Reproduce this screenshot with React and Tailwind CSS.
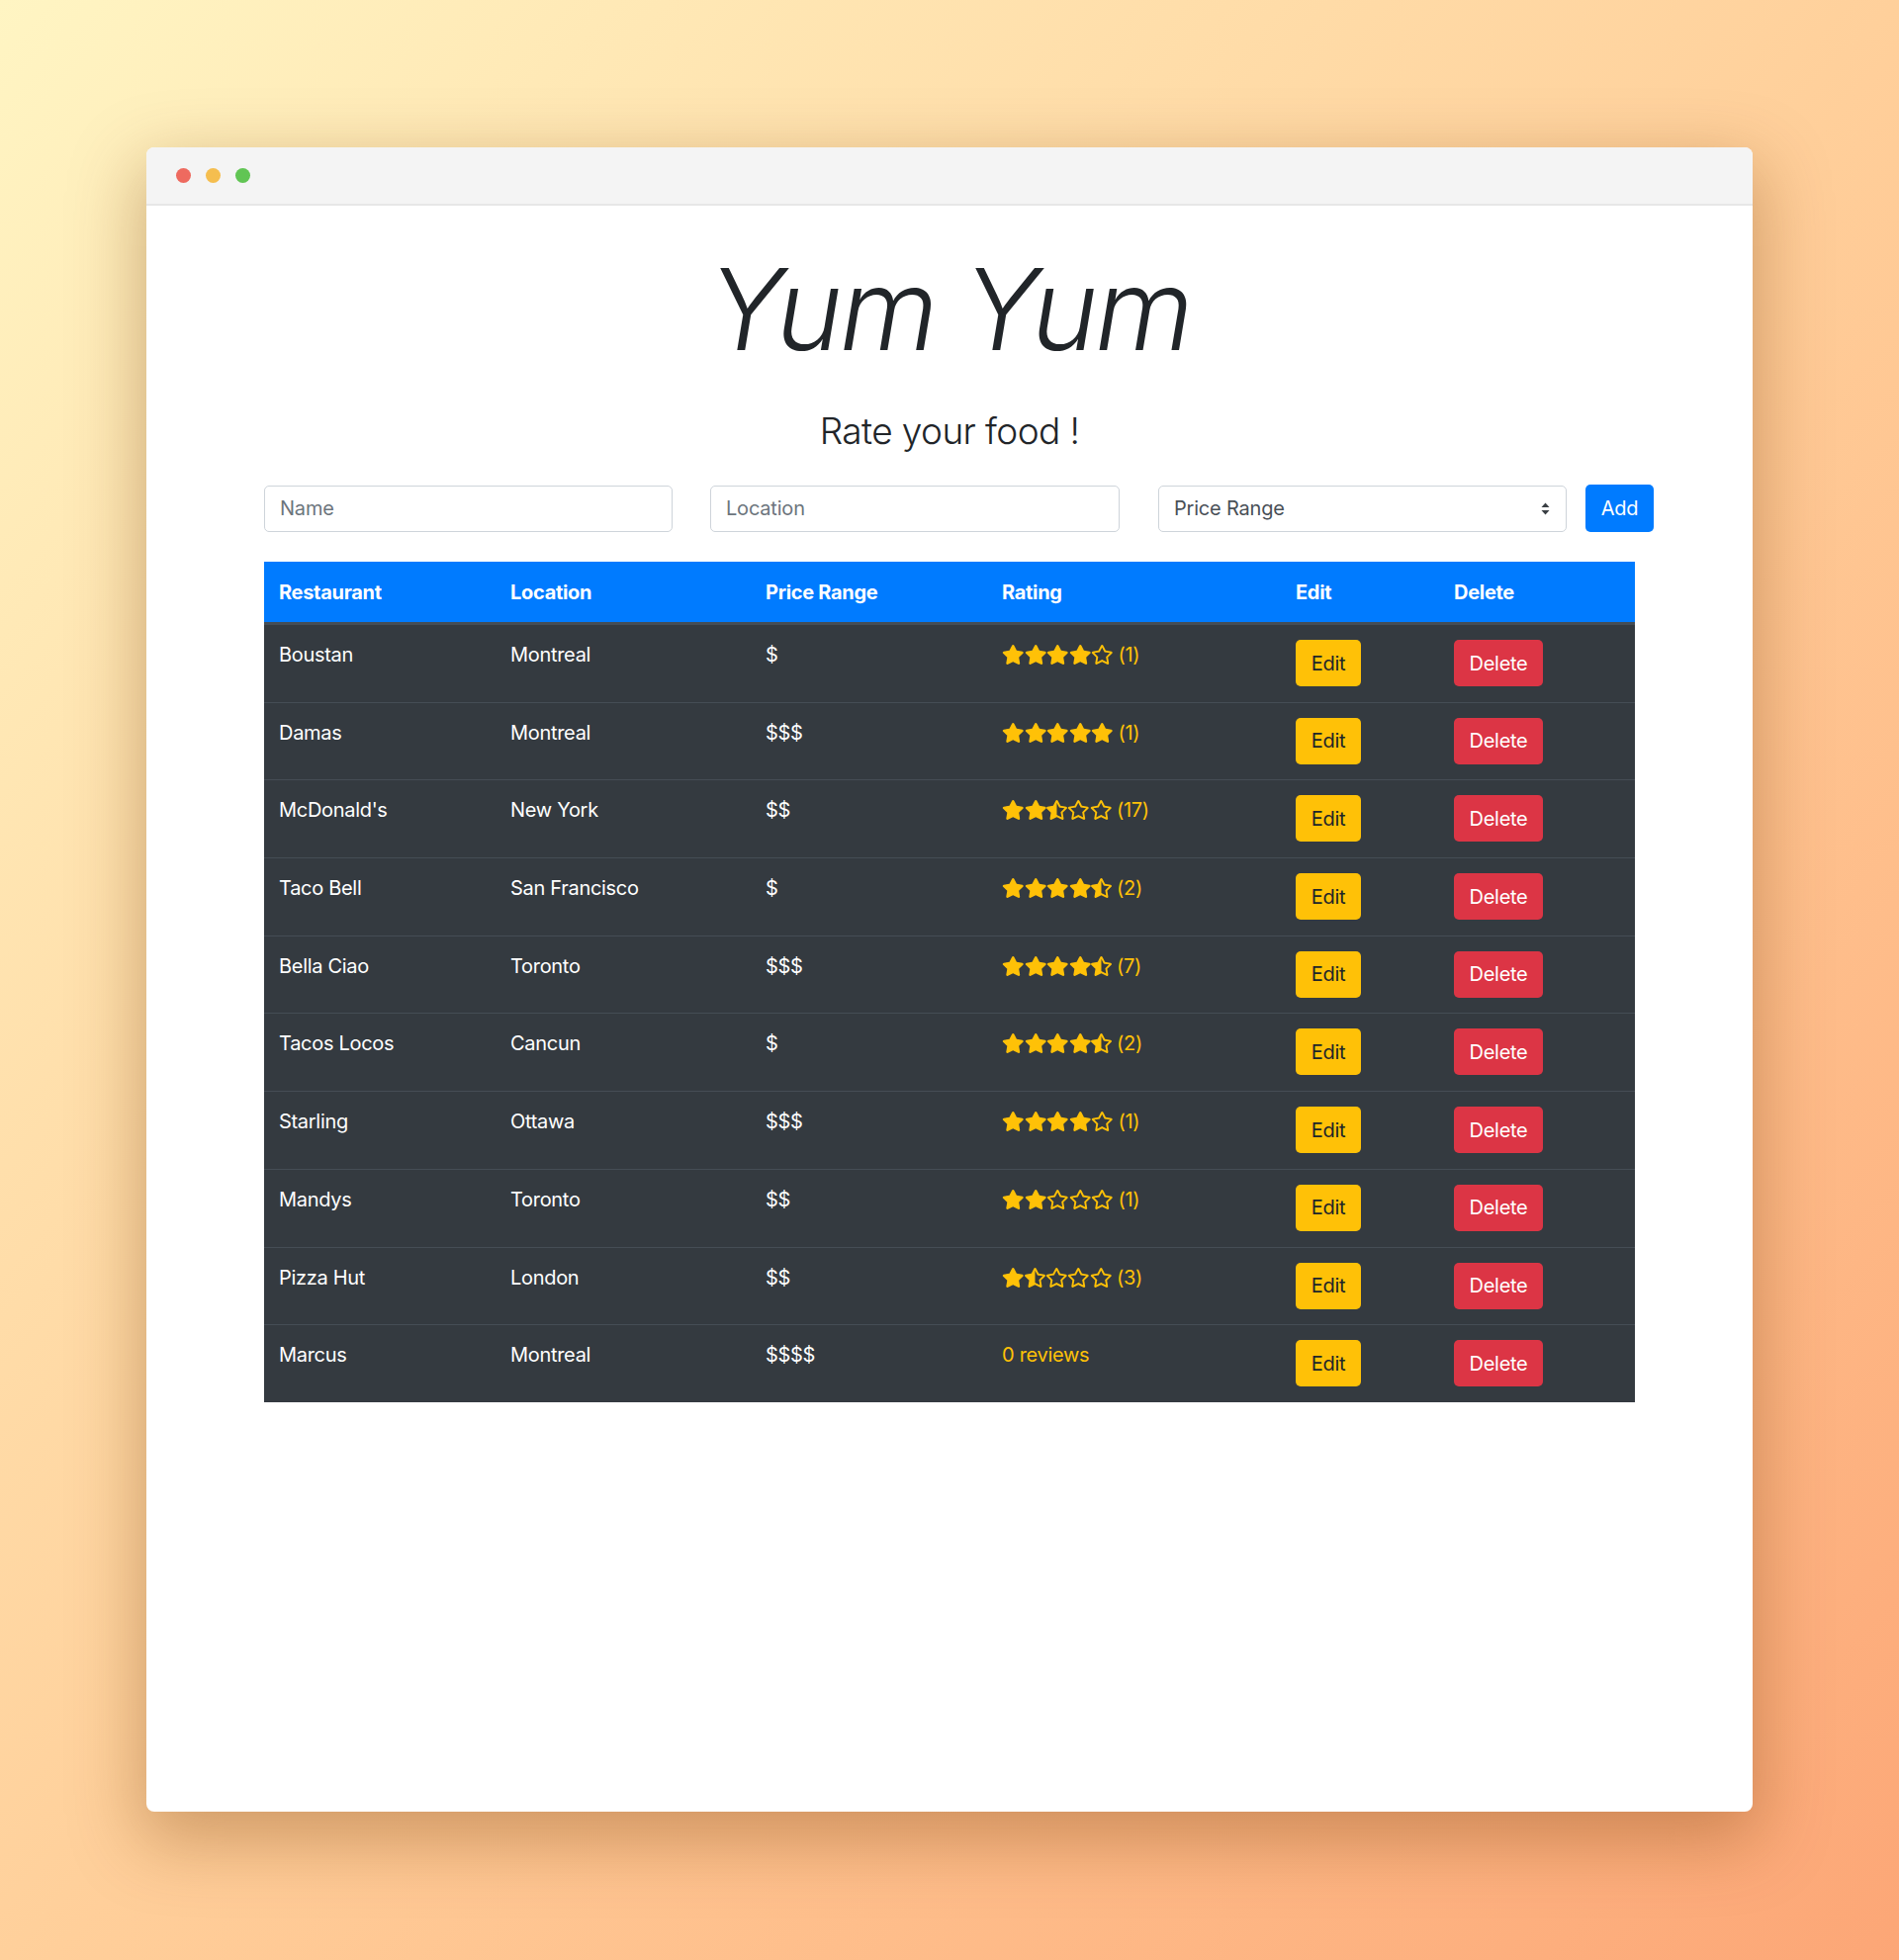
import React from 'react';
import { FaStar, FaStarHalfAlt, FaRegStar } from 'react-icons/fa';

const restaurants = [
    { name: 'Boustan', location: 'Montreal', price: '$', rating: 4, count: 1 },
    { name: 'Damas', location: 'Montreal', price: '$$$', rating: 5, count: 1 },
    { name: "McDonald's", location: 'New York', price: '$$', rating: 2.5, count: 17 },
    { name: 'Taco Bell', location: 'San Francisco', price: '$', rating: 4.5, count: 2 },
    { name: 'Bella Ciao', location: 'Toronto', price: '$$$', rating: 4.5, count: 7 },
    { name: 'Tacos Locos', location: 'Cancun', price: '$', rating: 4.5, count: 2 },
    { name: 'Starling', location: 'Ottawa', price: '$$$', rating: 4, count: 1 },
    { name: 'Mandys', location: 'Toronto', price: '$$', rating: 2, count: 1 },
    { name: 'Pizza Hut', location: 'London', price: '$$', rating: 1.5, count: 3 },
    { name: 'Marcus', location: 'Montreal', price: '$$$$', rating: 0, count: 0 },
];

const cols = 'grid grid-cols-[234px_258px_239px_297px_160px_198px]';

const StarRating = ({ rating, count }) => {
    if (!count) {
        return <span className="text-[#ffc107]">0 reviews</span>;
    }
    const stars = [];
    for (let i = 1; i <= 5; i++) {
        if (i <= rating) {
            stars.push(<FaStar key={i} className="w-[22.5px] h-[20px]" />);
        } else if (i === Math.ceil(rating)) {
            stars.push(<FaStarHalfAlt key={i} className="w-[21px] h-[20px]" />);
        } else {
            stars.push(<FaRegStar key={i} className="w-[22.5px] h-[20px]" />);
        }
    }
    return (
        <div className="flex items-center h-[30px] text-[#ffc107]">
            {stars}
            <span className="ml-[5px]">({count})</span>
        </div>
    );
};

const App = () => {
    return (
        <div className="min-h-screen w-full bg-linear-to-br from-[#fff5c3] via-[#ffd09b] to-[#fca676] pt-[149px] pb-[150px] font-['Inter',sans-serif]">
            <div className="mx-auto w-[1624px] h-[1683px] bg-white rounded-[8px] overflow-hidden shadow-[0_24px_70px_6px_rgba(120,60,10,0.35)]">
                {/* title bar */}
                <div className="h-[59px] bg-[#f4f4f4] border-b-2 border-[#e7e7e7] flex items-center pl-[30px] gap-[15px]">
                    <div className="w-[15px] h-[15px] rounded-full bg-[#ee6a5f]"></div>
                    <div className="w-[15px] h-[15px] rounded-full bg-[#f5be4f]"></div>
                    <div className="w-[15px] h-[15px] rounded-full bg-[#61c554]"></div>
                </div>

                <div className="pt-[46px] text-[#212529]">
                    <h1 className="text-center text-[114px] leading-[117px] tracking-[-3px] italic font-light">Yum Yum</h1>
                    <h2 className="mt-[41px] text-center text-[37px] leading-[47px] tracking-[-0.6px] font-light">Rate your food !</h2>

                    <div className="ml-[119px] mt-[31px] flex items-center text-[20px] tracking-[-0.2px]">
                        <input
                            placeholder="Name"
                            className="w-[413px] h-[47px] border border-[#ced4da] rounded-[5px] px-[15px] text-[#495057] placeholder:text-[#6c757d] outline-none"
                        />
                        <input
                            placeholder="Location"
                            className="ml-[38px] w-[414px] h-[47px] border border-[#ced4da] rounded-[5px] px-[15px] text-[#495057] placeholder:text-[#6c757d] outline-none"
                        />
                        <div className="ml-[39px] w-[413px] h-[47px] border border-[#ced4da] rounded-[5px] pl-[15px] pr-[16px] flex items-center justify-between text-[#495057]">
                            <span>Price Range</span>
                            <svg width="9" height="13" viewBox="0 0 9 13" fill="#3a3f44">
                                <path d="M4.5 0.5 L8.5 5 L0.5 5 Z" />
                                <path d="M0.5 8 L8.5 8 L4.5 12.5 Z" />
                            </svg>
                        </div>
                        <button className="ml-[19px] w-[69px] h-[48px] rounded-[5px] bg-[#007bff] text-white">Add</button>
                    </div>

                    <div className="ml-[119px] mt-[30px] w-[1386px] bg-[#343a40] text-white text-[20px] leading-[30px] tracking-[-0.3px]">
                        <div className={`${cols} h-[63px] bg-[#007bff] border-b-2 border-[#454d55] font-bold`}>
                            {['Restaurant', 'Location', 'Price Range', 'Rating', 'Edit', 'Delete'].map((h) => (
                                <div key={h} className="px-[15px] pt-[16px]">{h}</div>
                            ))}
                        </div>
                        {restaurants.map((r) => (
                            <div key={r.name} className={`${cols} border-t border-[#454d55]`}>
                                <div className="px-[15px] pt-[15px]">{r.name}</div>
                                <div className="px-[15px] pt-[15px]">{r.location}</div>
                                <div className="px-[15px] pt-[15px]">{r.price}</div>
                                <div className="px-[15px] pt-[15px]">
                                    <StarRating rating={r.rating} count={r.count} />
                                </div>
                                <div className="px-[15px] pt-[15px] pb-[15.7px]">
                                    <button className="w-[66px] h-[47px] rounded-[5px] bg-[#ffc107] text-[#212529]">Edit</button>
                                </div>
                                <div className="px-[15px] pt-[15px] pb-[15.7px]">
                                    <button className="w-[90px] h-[47px] rounded-[5px] bg-[#dc3545] text-white">Delete</button>
                                </div>
                            </div>
                        ))}
                    </div>
                </div>
            </div>
        </div>
    );
};

export default App;
